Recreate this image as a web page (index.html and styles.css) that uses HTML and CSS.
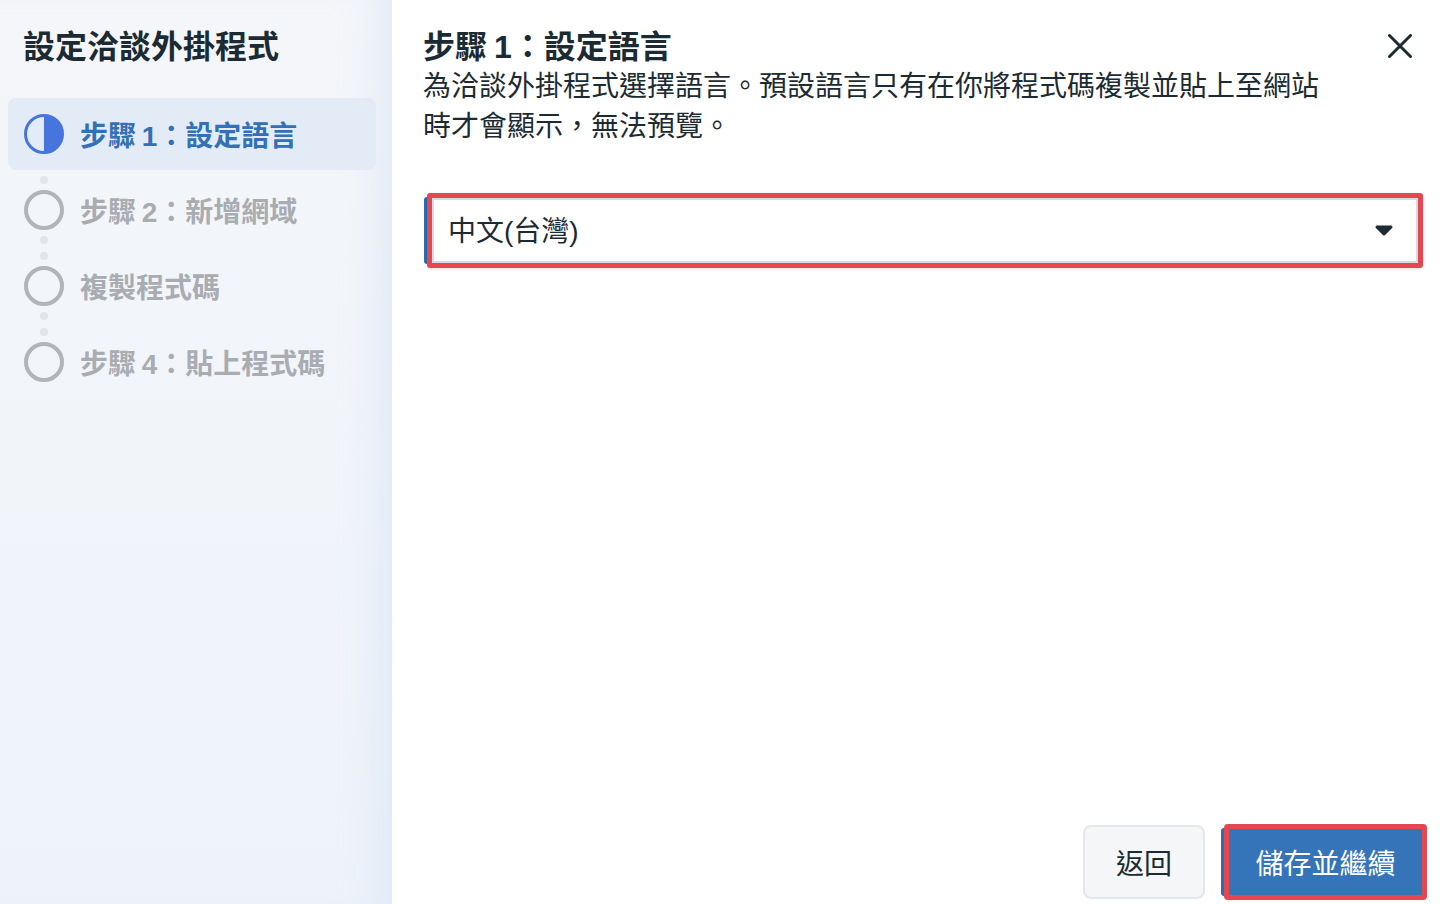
FILE: index.html
```html
<!DOCTYPE html>
<html lang="zh-Hant">
<head>
    <meta charset="UTF-8">
    <meta name="viewport" content="width=device-width, initial-scale=1.0">
    <title>設定洽談外掛程式</title>
    <link rel="stylesheet" href="styles.css">
</head>
<body>
    <aside class="sidebar">
        <h1 class="sidebar-title">設定洽談外掛程式</h1>
        <ol class="steps">
            <li class="step active"><span class="step-circle"></span>步驟 1：設定語言</li>
            <li class="step"><span class="step-circle"></span>步驟 2：新增網域</li>
            <li class="step"><span class="step-circle"></span>複製程式碼</li>
            <li class="step"><span class="step-circle"></span>步驟 4：貼上程式碼</li>
        </ol>
    </aside>

    <main class="main">
        <button class="close-btn" type="button" aria-label="關閉">
            <svg width="24" height="24" viewBox="0 0 24 24">
                <path d="M1.5 1.5L22.5 22.5M22.5 1.5L1.5 22.5" stroke="#1c2b33" stroke-width="3" stroke-linecap="round" fill="none"/>
            </svg>
        </button>

        <h2 class="heading">步驟 1：設定語言</h2>
        <p class="desc">為洽談外掛程式選擇語言。預設語言只有在你將程式碼複製並貼上至網站時才會顯示，無法預覽。</p>

        <div class="lang-select">
            <span>中文(台灣)</span>
            <svg width="18" height="11" viewBox="0 0 18 11">
                <path d="M2 0.5H16a1.5 1.5 0 0 1 1.1 2.5L10.1 10a1.5 1.5 0 0 1 -2.2 0L0.9 3A1.5 1.5 0 0 1 2 0.5Z" fill="#1c2b33"/>
            </svg>
        </div>

        <div class="actions">
            <button class="btn-back" type="button">返回</button>
            <button class="btn-save" type="button">儲存並繼續</button>
        </div>
    </main>
</body>
</html>
```

FILE: styles.css
```css
body {
    margin: 0;
    height: 100vh;
    display: flex;
    font-family: "Liberation Sans", "Noto Sans CJK TC", sans-serif;
    color: #1c2b33;
    background: #ffffff;
    overflow: hidden;
}

/* left column with the steps */
.sidebar {
    width: 392px;
    flex-shrink: 0;
    box-sizing: border-box;
    padding: 27px 16px 0 8px;
    background: linear-gradient(180deg, #f4f6f9 0%, #eef3fa 100%);
    box-shadow: inset -40px 0 40px -30px rgba(190, 210, 240, 0.35);
}

.sidebar-title {
    margin: 0 0 31px 15px;
    font-size: 32px;
    line-height: 40px;
    font-weight: 700;
    color: #1c2b33;
}

.steps {
    list-style: none;
    margin: 0;
    padding: 0;
    display: flex;
    flex-direction: column;
    gap: 4px;
}

.step {
    height: 72px;
    display: flex;
    align-items: center;
    gap: 16px;
    padding-left: 16px;
    border-radius: 8px;
    font-size: 28px;
    font-weight: 700;
    color: #a9acb1;
    word-spacing: -2px;
}

.step-circle {
    position: relative;
    width: 40px;
    height: 40px;
    box-sizing: border-box;
    flex-shrink: 0;
    border: 4px solid #b1b4b9;
    border-radius: 50%;
}

/* dotted connector between circles */
.step:not(.active) .step-circle::before,
.step:not(.active):not(:last-child) .step-circle::after {
    content: "";
    position: absolute;
    left: 12px;
    width: 8px;
    height: 8px;
    border-radius: 50%;
    background: #e3e5e8;
}

.step-circle::before {
    top: -18px;
}

.step-circle::after {
    bottom: -18px;
}

.step.active {
    background: #e3ecf6;
    color: #3370b6;
}

.step.active .step-circle {
    border: 3px solid #4874dd;
    background: linear-gradient(90deg, transparent 50%, #4874dd 50%);
}

/* right column */
.main {
    position: relative;
    flex: 1;
    display: flex;
    flex-direction: column;
    padding: 27px 21px 4px 31px;
}

.close-btn {
    position: absolute;
    top: 34px;
    right: 36px;
    width: 24px;
    height: 24px;
    padding: 0;
    border: none;
    background: none;
    cursor: pointer;
}

.close-btn svg {
    display: block;
}

.heading {
    margin: 0;
    font-size: 32px;
    line-height: 40px;
    font-weight: 700;
    word-spacing: -2px;
}

.desc {
    margin: 0;
    max-width: 910px;
    font-size: 28px;
    line-height: 40px;
}

.lang-select {
    position: relative;
    height: 75px;
    box-sizing: border-box;
    margin: 46px 4px 0 4px;
    padding: 0 25px 4px 16px;
    display: flex;
    align-items: center;
    justify-content: space-between;
    border: 5px solid #e3474f;
    border-radius: 3px;
    background: #ffffff;
    box-shadow: inset 0 0 0 2px #d3dbe6, 0 1px 4px rgba(0, 0, 0, 0.12);
    font-size: 28px;
}

.lang-select svg {
    margin-top: 4px;
}

.lang-select::before,
.btn-save::before {
    content: "";
    position: absolute;
    left: -8px;
    top: -1px;
    bottom: -1px;
    width: 4px;
    border-radius: 3px 0 0 3px;
    background: #2d6cb5;
    z-index: -1;
}

.actions {
    margin-top: auto;
    display: flex;
    justify-content: flex-end;
    align-items: center;
    gap: 19px;
}

.btn-back,
.btn-save {
    font-family: inherit;
    font-size: 28px;
    cursor: pointer;
    box-sizing: border-box;
}

.btn-back {
    width: 122px;
    height: 74px;
    background: #f5f6f7;
    border: 2px solid #e4e6eb;
    border-radius: 8px;
    color: #1c2b33;
}

.btn-save {
    position: relative;
    width: 203px;
    height: 76px;
    background: #3574b8;
    border: 5px solid #e3474f;
    border-radius: 4px;
    color: #ffffff;
}
```
